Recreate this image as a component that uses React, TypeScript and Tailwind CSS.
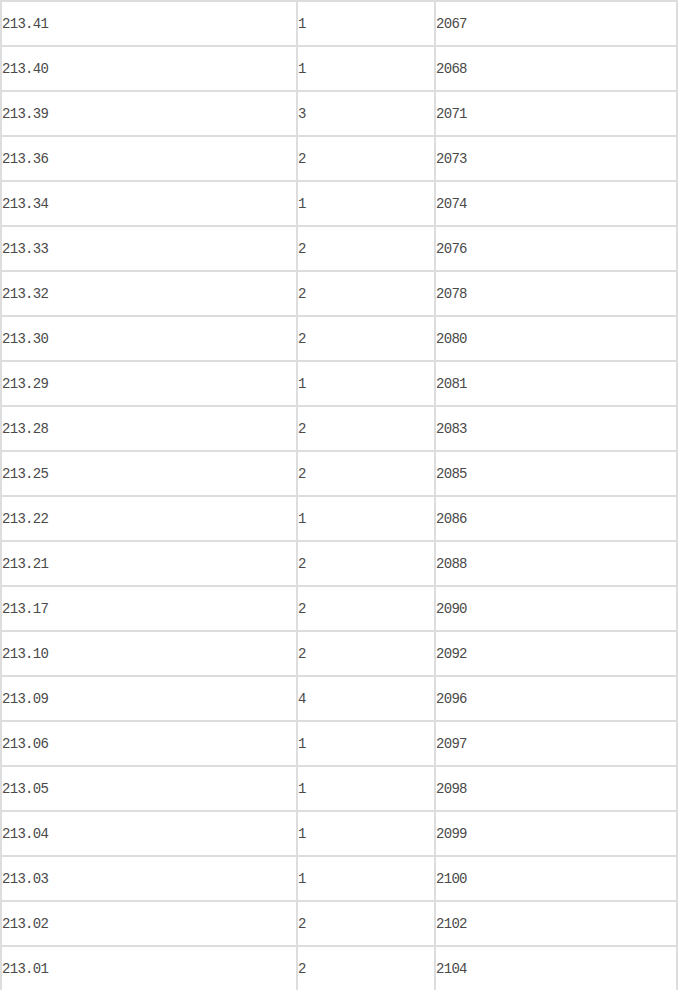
const rows: [string, string, string][] = [
  ['213.41', '1', '2067'],
  ['213.40', '1', '2068'],
  ['213.39', '3', '2071'],
  ['213.36', '2', '2073'],
  ['213.34', '1', '2074'],
  ['213.33', '2', '2076'],
  ['213.32', '2', '2078'],
  ['213.30', '2', '2080'],
  ['213.29', '1', '2081'],
  ['213.28', '2', '2083'],
  ['213.25', '2', '2085'],
  ['213.22', '1', '2086'],
  ['213.21', '2', '2088'],
  ['213.17', '2', '2090'],
  ['213.10', '2', '2092'],
  ['213.09', '4', '2096'],
  ['213.06', '1', '2097'],
  ['213.05', '1', '2098'],
  ['213.04', '1', '2099'],
  ['213.03', '1', '2100'],
  ['213.02', '2', '2102'],
  ['213.01', '2', '2104'],
];

const cell = 'h-[45px] border border-[#dddddd] flex items-center pt-[1px]';

export default function App() {
  return (
    <div className="w-[678px] bg-white font-['Liberation_Mono',monospace] text-[14px] tracking-[-0.7px] text-[#4a4a4a]">
      <div className="border border-[#dddddd] grid grid-cols-[296px_138px_242px]">
        {rows.map(([price, qty, total]) => (
          <div key={price} className="contents">
            <div className={cell}>{price}</div>
            <div className={cell}>{qty}</div>
            <div className={cell}>{total}</div>
          </div>
        ))}
      </div>
    </div>
  );
}
